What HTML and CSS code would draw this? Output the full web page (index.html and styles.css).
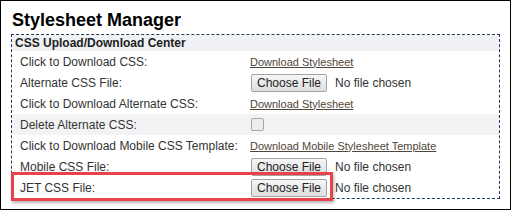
FILE: index.html
```html
<!DOCTYPE html>
<html lang="en">
<head>
    <meta charset="UTF-8">
    <title>Stylesheet Manager</title>
    <link rel="stylesheet" href="styles.css">
</head>
<body>
    <div class="frame">
        <div class="title">Stylesheet Manager</div>
        <div class="panel">
            <div class="panel-head">CSS Upload/Download Center</div>

            <div class="row">
                <span class="label">Click to Download CSS:</span>
                <a href="#" class="link">Download Stylesheet</a>
            </div>
            <div class="row">
                <span class="label">Alternate CSS File:</span>
                <span class="file"><button class="file-btn">Choose File</button><span class="file-name">No file chosen</span></span>
            </div>
            <div class="row">
                <span class="label">Click to Download Alternate CSS:</span>
                <a href="#" class="link">Download Stylesheet</a>
            </div>
            <div class="row shaded">
                <span class="label">Delete Alternate CSS:</span>
                <span><input type="checkbox" class="check"></span>
            </div>
            <div class="row">
                <span class="label">Click to Download Mobile CSS Template:</span>
                <a href="#" class="link">Download Mobile Stylesheet Template</a>
            </div>
            <div class="row">
                <span class="label">Mobile CSS File:</span>
                <span class="file"><button class="file-btn">Choose File</button><span class="file-name">No file chosen</span></span>
            </div>
            <div class="row marked">
                <span class="label">JET CSS File:</span>
                <span class="file"><button class="file-btn">Choose File</button><span class="file-name">No file chosen</span></span>
                <span class="callout"></span>
            </div>
        </div>
    </div>
</body>
</html>
```

FILE: styles.css
```css
body {
    margin: 0;
    background: #fff;
    font-family: 'Liberation Sans', Arial, sans-serif;
    color: #333;
}
.frame {
    box-sizing: border-box;
    width: 511px;
    height: 210px;
    border: 1px solid #000;
    padding: 9px 10px 0 10px;
}
.title {
    margin: 0 0 3px 1px;
    font-size: 18px;
    line-height: 21px;
    font-weight: bold;
    color: #000;
}
.panel {
    border: 1px dashed #1d3a60;
}
.panel-head {
    height: 16px;
    padding: 1px 0 0 3px;
    box-sizing: border-box;
    line-height: 15px;
    font-size: 12px;
    font-weight: bold;
    background: #eff1f5;
    color: #222;
}
.row {
    display: grid;
    grid-template-columns: 230px 1fr;
    align-items: center;
    height: 21px;
    padding-left: 8px;
    font-size: 12px;
}
.shaded {
    background: #f3f3f5;
}
.link {
    font-size: 11px;
    color: #4f4538;
    text-decoration: underline;
}
.file {
    display: flex;
    align-items: center;
    gap: 8px;
}
.file-btn {
    height: 18px;
    padding: 0 5px;
    margin-left: 1px;
    font-family: inherit;
    font-size: 12px;
    color: #222;
    background: linear-gradient(#f6f6f6, #dedede);
    border: 1px solid #a3a3a3;
    border-radius: 2px;
}
.file-name {
    color: #333;
}
.check {
    appearance: none;
    margin: 0 0 0 1px;
    width: 13px;
    height: 13px;
    border: 1px solid #a6a6a6;
    border-radius: 2px;
    background: #ececec;
    display: block;
}
.marked {
    position: relative;
}
.callout {
    position: absolute;
    top: -5px;
    left: -1px;
    width: 322px;
    height: 29px;
    box-sizing: border-box;
    border: 3px solid #e8434a;
    box-shadow: 1px 2px 3px rgba(0, 0, 0, 0.3);
}
```
